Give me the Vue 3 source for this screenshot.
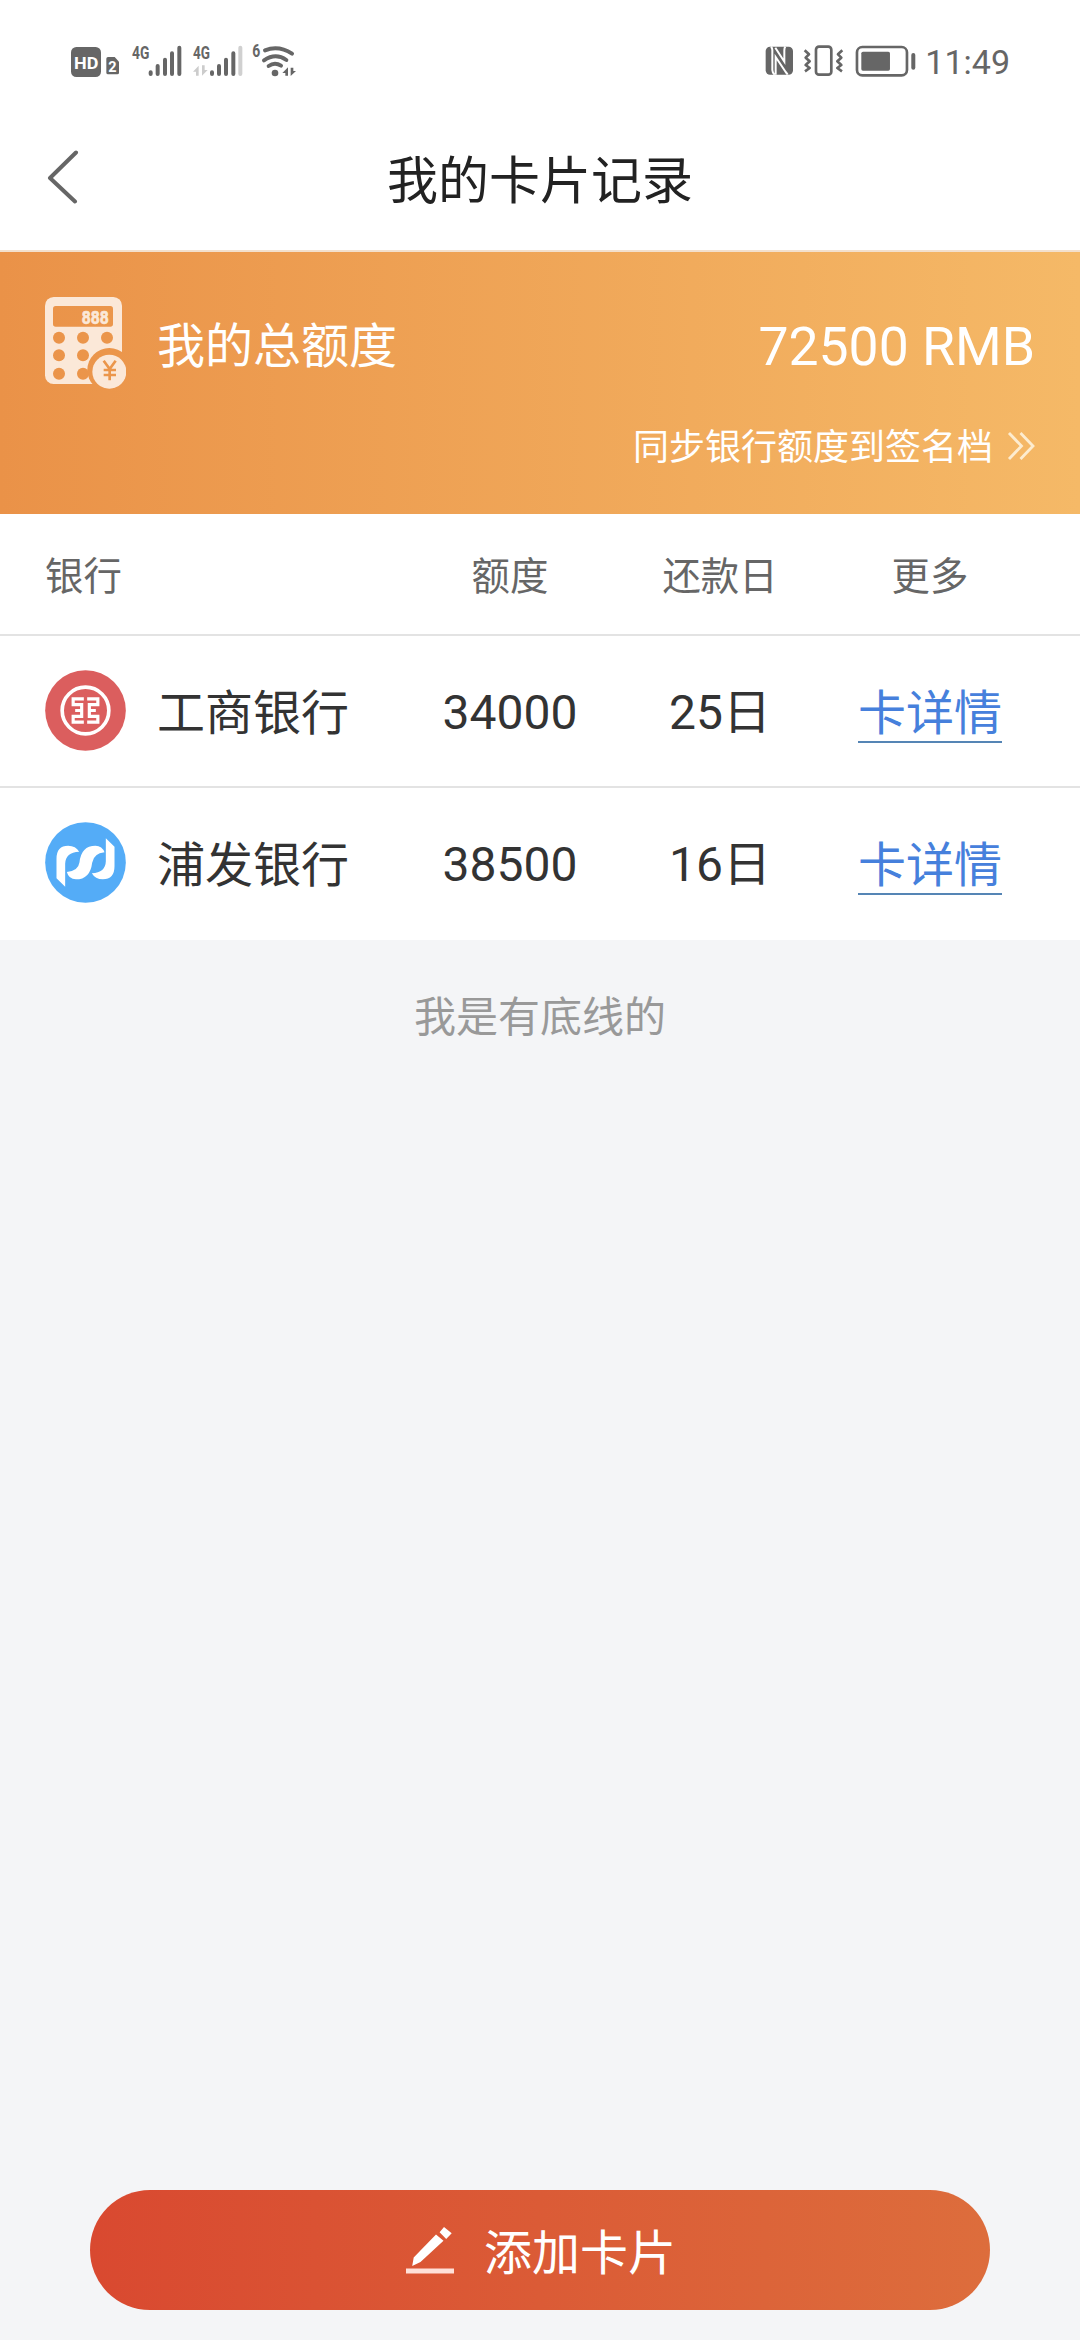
<script setup>
const columns = ['银行', '额度', '还款日', '更多']
const cards = [
  { id: 'icbc', bank: '工商银行', limit: '34000', day: '25日' },
  { id: 'spdb', bank: '浦发银行', limit: '38500', day: '16日' },
]
const keyRows = [263, 316, 371]
const keyCols = [177, 249, 321]
</script>

<template>
  <div class="page">
    <div class="status">
      <svg class="status-left" viewBox="0 0 810 240">
        <rect x="63" y="81" width="90" height="90" rx="16" fill="#666" />
        <text x="72" y="146" class="st bold" font-size="52" fill="#fff" textLength="73" lengthAdjust="spacingAndGlyphs">HD</text>
        <path d="M174 111h20l13 14v33q0 5-5 5h-28q-5 0-5-5v-42q0-5 5-5z" fill="#666" />
        <text x="175" y="156" class="st bold" font-size="43" fill="#fff" textLength="25" lengthAdjust="spacingAndGlyphs">2</text>
        <text x="246" y="117" class="st bold" font-size="53" fill="#666" textLength="52" lengthAdjust="spacingAndGlyphs">4G</text>
        <g stroke="#666" stroke-width="12" stroke-linecap="round">
          <path d="M302 157v5M323 138v24M345 119v43M366 100v62M388 83v79" />
          <path d="M486 157v5M507 138v24M528 119v43M550 100v62" />
          <path d="M571 83v79" stroke="#d0d0d0" />
        </g>
        <text x="429" y="117" class="st bold" font-size="53" fill="#666" textLength="51" lengthAdjust="spacingAndGlyphs">4G</text>
        <path d="M429 155l17-18v30h-8v-12zM473 150l-17 17v-31h8v14z" fill="#ccc" />
        <text x="607" y="111" class="st bold" font-size="53" fill="#666" textLength="24" lengthAdjust="spacingAndGlyphs">6</text>
        <g fill="none" stroke="#666" stroke-width="12" stroke-linecap="round">
          <path d="M645 91q41-16 81 10" />
          <path d="M642 121q35-24 67-1" />
          <path d="M656 138q18-13 37-1" />
        </g>
        <circle cx="675" cy="159" r="10" fill="#666" />
        <path d="M697 159l17-17v25h-8v-8zM738 153l-16 15v-25h8v10z" fill="#666" />
      </svg>
      <div class="status-right">
        <svg class="status-icons" viewBox="70 70 460 110">
          <rect x="75" y="81" width="82" height="84" rx="13" fill="#666" />
          <g fill="none" stroke="#fff" stroke-width="6">
            <path d="M91 81q4 4 4 10v60q0 8 7 14" />
            <path d="M104 84l27 42V92q0-7 3-11" />
            <path d="M105 165V112l30 45q5 6 6 8" />
          </g>
          <g fill="none" stroke="#666" stroke-width="8">
            <rect x="226" y="81" width="46" height="84" rx="9" />
            <path d="M192 92l13 12-10 10 12 11-12 11 12 9-14 10M305 92l-13 12 10 10-12 11 12 11-12 9 14 10" stroke-linejoin="round" />
            <rect x="349" y="82" width="150" height="85" rx="16" />
          </g>
          <rect x="362" y="96" width="86" height="57" rx="5" fill="#666" />
          <rect x="512" y="100" width="12" height="50" rx="6" fill="#666" />
        </svg>
        <span class="clock">11:49</span>
      </div>
    </div>

    <header class="nav">
      <svg class="back" viewBox="0 0 32 54">
        <path d="M29 2.5L3 28l25 23.500" fill="none" stroke="#666" stroke-width="4" stroke-linecap="round" stroke-linejoin="round" />
      </svg>
      <h1>我的卡片记录</h1>
    </header>

    <section class="summary">
      <div class="total">
        <svg class="calc" viewBox="135 141 243 276">
          <mask id="calc-cut">
            <rect x="135" y="141" width="231" height="261" rx="26" fill="#fff" />
            <rect x="159" y="168" width="180" height="62" rx="8" fill="#000" />
            <template v-for="y in keyRows" :key="y">
              <circle v-for="x in keyCols" :key="x" :cx="x" :cy="y" r="18" fill="#000" />
            </template>
            <circle cx="328" cy="360" r="66" fill="#000" />
            <circle cx="328" cy="365" r="51" fill="#fff" />
            <path d="M311 332l18 25 18-25M329 357v34M311 360h37M311 375h37" fill="none" stroke="#000" stroke-width="8" />
          </mask>
          <rect x="135" y="141" width="243" height="276" fill="#fbe8d8" mask="url(#calc-cut)" />
          <text x="245" y="221" class="st bold" font-size="55" fill="#fbe8d8" stroke="#fbe8d8" stroke-width="2" textLength="81" lengthAdjust="spacingAndGlyphs">888</text>
        </svg>
        <span class="total-label">我的总额度</span>
        <span class="total-value">72500 RMB</span>
      </div>
      <div class="sync">
        <span>同步银行额度到签名档</span>
        <svg class="more" viewBox="0 0 28 30">
          <path d="M2 2l12.500 13L2 28M13.500 2L26 15 13.500 28" fill="none" stroke="#fdeccf" stroke-width="2.800" />
        </svg>
      </div>
    </section>

    <section class="table">
      <div class="row head">
        <span v-for="c in columns" :key="c">{{ c }}</span>
      </div>
      <div v-for="card in cards" :key="card.id" class="row card">
        <div class="bank">
          <svg v-if="card.id === 'icbc'" class="logo" viewBox="30.500 30 243 243">
            <circle cx="152" cy="151.500" r="121" fill="#db5e5e" />
            <circle cx="152" cy="151.500" r="70" fill="none" stroke="#fff" stroke-width="11" />
            <g fill="none" stroke="#fff" stroke-width="9.500">
              <path d="M147 116.500h-32V134h25.500v35H115v17.500h32M121 151.500h20" />
              <path d="M157 116.500h32V134h-25.500v35H189v17.500h-32M183 151.500h-20" />
            </g>
          </svg>
          <svg v-else class="logo" viewBox="30.500 486 243 243">
            <circle cx="152" cy="607.500" r="121" fill="#54acf7" />
            <g fill="#fff">
              <path d="M91 680L65 655v-59q0-39 35-39 23 0 33 18-41 2-42 36z" />
              <path d="M213 535l26 25v59q0 39-35 39-23 0-33-18 41-2 42-36z" />
              <path d="M96 636q34-2 38-29 5-50 48-50 20 0 27 20-32 3-37 31-6 50-49 50-21 0-27-22z" />
            </g>
          </svg>
          <span class="name">{{ card.bank }}</span>
        </div>
        <span class="cell">{{ card.limit }}</span>
        <span class="cell">{{ card.day }}</span>
        <span class="cell"><a class="detail">卡详情</a></span>
      </div>
    </section>

    <p class="end">我是有底线的</p>

    <button class="add">
      <svg class="pencil" viewBox="405 2226 48 47">
        <path d="M443 2226l7.700 6.300-5.500 5.700-6.600-6.700zM435 2233.500l7.500 6.200-23 21.300-8.300 4 1.500-8.500z" fill="#fff" />
        <path d="M405 2267.500h48v5h-48z" fill="#ffe0d8" />
      </svg>
      <span>添加卡片</span>
    </button>
  </div>
</template>

<style>
body {
  margin: 0;
  background: #f4f5f7;
}
</style>

<style scoped>
.page {
  box-sizing: border-box;
  width: 1080px;
  height: 2340px;
  padding-bottom: 30px;
  display: flex;
  flex-direction: column;
  background: #f4f5f7;
  color: #333;
  font-family: Roboto, "Noto Sans CJK SC", sans-serif;
  font-size: 48px;
  overflow: hidden;
}
.status {
  height: 100px;
  padding: 0 70px 0 50px;
  box-sizing: border-box;
  display: flex;
  justify-content: space-between;
  align-items: center;
  background: #fff;
}
.status-left {
  width: 270px;
  height: 80px;
  margin-top: 20px;
}
.st {
  font-family: Roboto, sans-serif;
}
.bold {
  font-weight: 700;
}
.status-right {
  display: flex;
  align-items: center;
  margin-top: 23px;
}
.status-icons {
  width: 153.300px;
  height: 36.700px;
}
.clock {
  margin-left: 8px;
  font-size: 34px;
  line-height: 40px;
  color: #666;
}
.nav {
  box-sizing: border-box;
  height: 152px;
  padding: 0 47px;
  display: grid;
  grid-template-columns: 32px 1fr 32px;
  align-items: center;
  background: #fff;
  border-bottom: 2px solid #f3e0cd;
}
.back {
  width: 32px;
  height: 54px;
  margin-top: 4px;
}
.nav h1 {
  margin: 13px 0 0;
  font-size: 51px;
  line-height: 60px;
  font-weight: 400;
  color: #222;
  text-align: center;
}
.summary {
  box-sizing: border-box;
  height: 262px;
  padding: 45px 45px 0;
  background: linear-gradient(90deg, #ea9248, #f5b967);
  color: #fff;
}
.total {
  height: 92px;
  display: flex;
  align-items: center;
}
.calc {
  width: 81px;
  height: 92px;
}
.total-label {
  margin: 7px 0 0 31px;
  line-height: 60px;
}
.total-value {
  margin: 7px 0 0 auto;
  font-size: 53.500px;
  line-height: 64px;
}
.sync {
  margin-top: 37px;
  height: 44px;
  display: flex;
  justify-content: flex-end;
  align-items: center;
  gap: 14px;
  font-size: 36px;
  line-height: 44px;
}
.more {
  width: 28px;
  height: 30px;
  margin-bottom: 4px;
}
.table {
  background: #fff;
}
.row {
  box-sizing: border-box;
  height: 152px;
  padding: 0 45px;
  display: grid;
  grid-template-columns: 360px repeat(3, 210px);
  align-items: center;
  text-align: center;
  border-bottom: 2px solid #e3e3e3;
}
.row:last-child {
  border-bottom-color: #fff;
}
.head {
  height: 122px;
  padding-bottom: 3px;
  font-size: 38.400px;
  color: #666;
}
.head span:first-child {
  text-align: left;
}
.bank {
  display: flex;
  align-items: center;
  gap: 31px;
}
.logo {
  width: 81px;
  height: 81px;
  margin-bottom: 2px;
}
.name {
  line-height: 60px;
  margin-top: 5px;
}
.cell {
  line-height: 60px;
  padding-top: 3px;
}
.cell:nth-child(3) {
  padding-top: 4px;
}
.cell:last-child {
  padding-top: 0;
}
.detail {
  display: block;
  box-sizing: border-box;
  width: 144px;
  height: 64px;
  margin: 0 auto;
  line-height: 70px;
  color: #4680dc;
  border-bottom: 2px solid #5585b5;
}
.end {
  margin: 52px 0 0;
  font-size: 42px;
  line-height: 52px;
  text-align: center;
  color: #999;
}
.add {
  margin: auto 90px 0;
  height: 120px;
  padding: 0 0 0 2px;
  display: flex;
  justify-content: center;
  align-items: center;
  gap: 30px;
  border: 0;
  border-radius: 60px;
  background: linear-gradient(90deg, #d94930, #dd6d3c);
  color: #fff;
  font: inherit;
}
.add span {
  margin-bottom: 2px;
}
.pencil {
  width: 48px;
  height: 47px;
}
</style>
